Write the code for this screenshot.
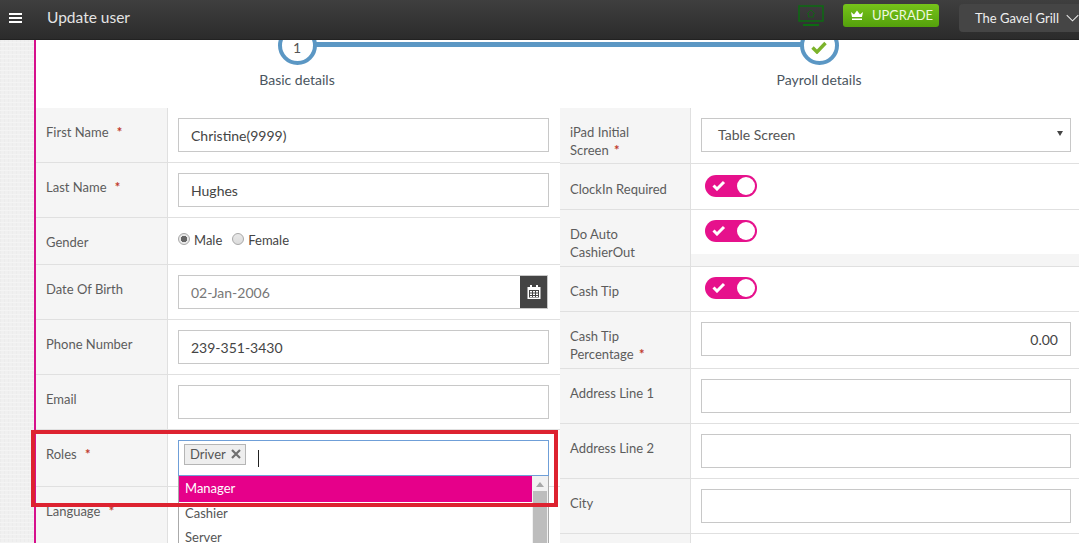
<script lang="ts">
	// all form rows are static in this screen, nothing to load
</script>

<div class="page">
	<header class="topbar">
		<button class="burger" aria-label="Menu"><span></span><span></span><span></span></button>
		<h1>Update user</h1>
		<div class="top-right">
			<svg class="screen" width="26" height="22" viewBox="0 0 26 22" fill="none" stroke="#0d6b12" stroke-width="1.5">
				<rect x="1" y="1" width="24" height="15" />
				<path d="M9 9l4-4 4 4M10.500 8.500V12h5V8.500" stroke-width="0.8" />
				<path d="M5 20h16" stroke-width="2" />
			</svg>
			<div class="upgrade">
				<svg width="16" height="12" viewBox="0 0 16 12" fill="#fff">
					<path d="M2 3l3 2.500L8 1.500l3 4 3-2.500-1 5H3zM3 9.500h10V11H3z" />
				</svg>
				UPGRADE
			</div>
			<div class="venue">
				The Gavel Grill
				<svg width="18" height="10" viewBox="0 0 18 10" fill="none" stroke="#e8e8e8" stroke-width="1.400"><path d="M1 1l8 8 8-8" /></svg>
			</div>
		</div>
	</header>

	<div class="shell">
		<main class="content">
			<div class="stepper">
				<div class="line"></div>
				<div class="step">
					<div class="dot">1</div>
					<div class="step-label">Basic details</div>
				</div>
				<div class="step">
					<div class="dot">
						<svg width="16" height="13" viewBox="0 0 16 13" fill="none" stroke="#7cb32b" stroke-width="3.400"><path d="M1.500 6.500l4.500 4.500 8.500-9" /></svg>
					</div>
					<div class="step-label">Payroll details</div>
				</div>
			</div>

			<div class="form">
				<div class="col">
					<div class="row h55">
						<div class="label">First Name <i>*</i></div>
						<div class="field"><div class="input">Christine(9999)</div></div>
					</div>
					<div class="row h55">
						<div class="label">Last Name <i>*</i></div>
						<div class="field"><div class="input">Hughes</div></div>
					</div>
					<div class="row h47">
						<div class="label">Gender</div>
						<div class="field radios">
							<span class="radio on"></span><span class="radio-text">Male</span>
							<span class="radio"></span><span class="radio-text">Female</span>
						</div>
					</div>
					<div class="row h55">
						<div class="label">Date Of Birth</div>
						<div class="field">
							<div class="input date">
								<span>02-Jan-2006</span>
								<div class="cal">
									<svg width="14" height="14" viewBox="0 0 14 14" fill="#fff">
										<path d="M3 0h2v2h4V0h2v2h2.500v12H.5V2H3zM2 5v7.500h10V5z" />
										<path d="M3 6h2v1.500H3zM6 6h2v1.500H6zM9 6h2v1.500H9zM3 8.500h2V10H3zM6 8.500h2V10H6zM9 8.500h2V10H9zM3 11h2v1H3zM6 11h2v1H6zM9 11h2v1H9z" />
									</svg>
								</div>
							</div>
						</div>
					</div>
					<div class="row h55">
						<div class="label">Phone Number</div>
						<div class="field"><div class="input">239-351-3430</div></div>
					</div>
					<div class="row h55">
						<div class="label">Email</div>
						<div class="field"><div class="input"></div></div>
					</div>
					<div class="row h57">
						<div class="label">Roles <i>*</i></div>
						<div class="field">
							<div class="multi">
								<span class="chip">Driver
									<svg width="10" height="10" viewBox="0 0 10 10" fill="none" stroke="#707070" stroke-width="2.200"><path d="M1 1l8 8M9 1l-8 8" /></svg>
								</span>
								<span class="caret"></span>
							</div>
							<div class="dropdown">
								<ul>
									<li class="active">Manager</li>
									<li>Cashier</li>
									<li>Server</li>
								</ul>
								<div class="scroll">
									<span class="arrow"></span>
									<span class="thumb"></span>
								</div>
							</div>
						</div>
					</div>
					<div class="row tall">
						<div class="label">Language <i>*</i></div>
						<div class="field"></div>
					</div>
				</div>

				<div class="col right">
					<div class="row h56">
						<div class="label">iPad Initial Screen <i>*</i></div>
						<div class="field">
							<div class="input select">Table Screen <span class="tri"></span></div>
						</div>
					</div>
					<div class="row h46">
						<div class="label low">ClockIn Required</div>
						<div class="field tog low"><span class="toggle"><svg width="14" height="11" viewBox="0 0 14 11" fill="none" stroke="#fff" stroke-width="3"><path d="M1.500 5.500l3.500 3.500 7-7" /></svg><em></em></span></div>
					</div>
					<div class="row h57 cut">
						<div class="label">Do Auto CashierOut</div>
						<div class="field tog short"><span class="toggle"><svg width="14" height="11" viewBox="0 0 14 11" fill="none" stroke="#fff" stroke-width="3"><path d="M1.500 5.500l3.500 3.500 7-7" /></svg><em></em></span></div>
					</div>
					<div class="row h45">
						<div class="label">Cash Tip</div>
						<div class="field tog"><span class="toggle"><svg width="14" height="11" viewBox="0 0 14 11" fill="none" stroke="#fff" stroke-width="3"><path d="M1.500 5.500l3.500 3.500 7-7" /></svg><em></em></span></div>
					</div>
					<div class="row h57">
						<div class="label">Cash Tip Percentage <i>*</i></div>
						<div class="field"><div class="input num">0.00</div></div>
					</div>
					<div class="row h55">
						<div class="label">Address Line 1</div>
						<div class="field"><div class="input"></div></div>
					</div>
					<div class="row h55">
						<div class="label">Address Line 2</div>
						<div class="field"><div class="input"></div></div>
					</div>
					<div class="row h55">
						<div class="label">City</div>
						<div class="field"><div class="input"></div></div>
					</div>
					<div class="row tall">
						<div class="label"></div>
						<div class="field"></div>
					</div>
				</div>
			</div>

			<div class="highlight"></div>
		</main>
	</div>
</div>

<style>
	:global(body) {
		margin: 0;
		overflow: hidden;
		font-family: Lato, "Liberation Sans", sans-serif;
	}

	.page {
		width: 1079px;
		height: 543px;
		overflow: hidden;
		display: flex;
		flex-direction: column;
		background: #efefef;
	}

	.topbar {
		height: 40px;
		flex: none;
		display: flex;
		align-items: center;
		box-sizing: border-box;
		background: linear-gradient(#3f3f3f, #2b2b2b);
		border-bottom: 1px solid #222;
		color: #ececec;
		position: relative;
		z-index: 2;
	}

	.burger {
		display: flex;
		flex-direction: column;
		gap: 2px;
		width: 13px;
		margin: -4px 0 0 9px;
		padding: 0;
		border: 0;
		background: none;
	}

	.burger span {
		height: 2px;
		background: #fff;
	}

	h1 {
		margin: -5px 0 0 25px;
		font-size: 15.500px;
		font-weight: 400;
		color: #e4e4e4;
	}

	.top-right {
		margin-left: auto;
		align-self: flex-start;
		display: flex;
		align-items: flex-start;
	}

	.screen {
		margin: 5px 19px 0 0;
	}

	.upgrade {
		width: 96px;
		height: 23px;
		margin: 4px 20px 0 0;
		padding-bottom: 1px;
		display: flex;
		align-items: center;
		justify-content: center;
		gap: 7px;
		box-sizing: border-box;
		border-radius: 3px;
		background: linear-gradient(#76c41a, #54a00c);
		font-size: 13px;
		color: #eef8de;
	}

	.venue {
		width: 120px;
		height: 28px;
		margin-top: 4px;
		padding: 0 0 0 16px;
		box-sizing: border-box;
		display: flex;
		align-items: center;
		gap: 7px;
		white-space: nowrap;
		border-radius: 4px 0 0 4px;
		background: #454545;
		font-size: 13px;
		color: #eee;
	}

	.shell {
		flex: 1;
		padding-left: 34px;
		min-height: 0;
		background-color: #f0f0f0;
		background-image: repeating-linear-gradient(0deg, #f4f4f4 0 1px, transparent 1px 4px),
			repeating-linear-gradient(90deg, #ececec 0 1px, transparent 1px 4px);
	}

	.content {
		position: relative;
		height: 100%;
		background: #fff;
		border-left: 2px solid #d6108c;
	}

	.stepper {
		position: relative;
		height: 68px;
		display: grid;
		grid-template-columns: 522px 522px;
		overflow: hidden;
	}

	.line {
		position: absolute;
		left: 280px;
		right: 260px;
		top: 2px;
		height: 5px;
		background: #5b97c4;
	}

	.step {
		display: flex;
		flex-direction: column;
		align-items: center;
		margin-top: -14px;
		position: relative;
	}

	.dot {
		width: 31px;
		height: 28px;
		border: 4px solid #5b97c4;
		border-radius: 50%;
		background: #fff;
		display: flex;
		align-items: center;
		justify-content: center;
		font-size: 14px;
		color: #555;
		padding-top: 3px;
	}

	.step-label {
		margin-top: 6px;
		font-size: 14px;
		color: #4a5560;
	}

	.form {
		display: grid;
		grid-template-columns: 524px 519px;
	}

	.col {
		display: flex;
		flex-direction: column;
	}

	.row {
		display: grid;
		grid-template-columns: 132px 1fr;
		box-sizing: border-box;
		border-bottom: 1px solid #e0e0e0;
		background: #fff;
	}

	.right .row {
		grid-template-columns: 131px 1fr;
	}

	.h45 { height: 45px; }
	.h46 { height: 46px; }
	.h47 { height: 47px; }
	.h55 { height: 55px; }
	.h56 { height: 56px; }
	.h57 { height: 57px; }
	.tall { height: 70px; }

	.label {
		background: #f5f5f5;
		border-right: 1px solid #e0e0e0;
		padding: 15px 8px 0 10px;
		font-size: 13px;
		line-height: 18px;
		color: #5c5c5c;
	}

	.label i {
		margin-left: 5px;
		font-style: normal;
		font-weight: 700;
		color: #c0392b;
	}

	.right .label {
		padding-right: 30px;
	}

	.right .label i {
		margin-left: 2px;
	}

	.label.low {
		padding-top: 16px;
		padding-right: 8px;
	}

	.field {
		padding: 10px 11px 0 10px;
		position: relative;
		min-width: 0;
	}

	.right .field {
		padding-right: 8px;
	}

	.input {
		height: 34px;
		box-sizing: border-box;
		border: 1px solid #c8c8c8;
		padding: 0 12px;
		font-size: 14px;
		line-height: 34px;
		color: #444;
	}

	.date {
		display: flex;
		justify-content: space-between;
		margin-right: 1px;
		padding-right: 0;
		color: #777;
	}

	.cal {
		width: 27px;
		height: 32px;
		background: #444;
		display: flex;
		align-items: center;
		justify-content: center;
	}

	.select {
		display: flex;
		align-items: center;
		justify-content: space-between;
		padding: 0 7px 0 16px;
		color: #555;
	}

	.tri {
		border: 3px solid transparent;
		border-top: 5px solid #444;
		border-bottom: 0;
		margin-top: -3px;
	}

	.num {
		text-align: right;
	}

	.radios {
		display: flex;
		align-items: center;
		padding-top: 0;
		padding-bottom: 3px;
		font-size: 13px;
		color: #444;
	}

	.radio {
		width: 12px;
		height: 12px;
		box-sizing: border-box;
		border: 1px solid #a8a8a8;
		border-radius: 50%;
		background: linear-gradient(#e8e8e8, #dcdcdc);
		margin-right: 4px;
		position: relative;
		top: -1px;
	}

	.radio.on {
		background: radial-gradient(circle, #666 0 3px, #e8e8e8 3.500px);
	}

	.radio-text {
		margin-right: 10px;
	}

	.tog {
		padding-top: 10px;
		padding-left: 14px;
	}

	.tog.low {
		padding-top: 11px;
	}

	.short {
		height: 44px;
		box-sizing: border-box;
		background: #fff;
	}

	.cut {
		background: #f5f5f5;
	}

	.toggle {
		display: block;
		width: 52px;
		height: 22px;
		border-radius: 11px;
		background: #e6118c;
		position: relative;
	}

	.toggle svg {
		position: absolute;
		left: 7px;
		top: 5px;
	}

	.toggle em {
		position: absolute;
		right: 2px;
		top: 2px;
		width: 18px;
		height: 18px;
		border-radius: 50%;
		background: #fff;
	}

	.multi {
		height: 36px;
		box-sizing: border-box;
		border: 1px solid #6f9fd8;
		display: flex;
		align-items: flex-start;
		padding: 3px 0 0 5px;
		background: #fff;
	}

	.chip {
		height: 21px;
		box-sizing: border-box;
		border: 1px solid #b5b5b5;
		background: #eee;
		padding: 0 4px 1px 5px;
		display: flex;
		align-items: center;
		gap: 5px;
		font-size: 13px;
		color: #555;
	}

	.caret {
		width: 1px;
		height: 17px;
		margin: 6px 0 0 12px;
		background: #222;
	}

	.dropdown {
		position: absolute;
		left: 10px;
		right: 11px;
		top: 46px;
		height: 70px;
		display: flex;
		background: #fff;
		border-right: 1px solid #aaa;
		border-left: 1px solid #aaa;
		z-index: 1;
		overflow: hidden;
	}

	.dropdown ul {
		flex: 1;
		margin: 0;
		padding: 0;
		list-style: none;
		font-size: 13px;
		color: #555;
	}

	.dropdown li {
		height: 24px;
		line-height: 23px;
		padding-left: 6px;
	}

	.dropdown li.active {
		height: 26px;
		line-height: 25px;
		background: #e6008a;
		color: #fff;
	}

	.scroll {
		width: 16px;
		background: #f1f1f1;
		display: flex;
		flex-direction: column;
		align-items: center;
	}

	.arrow {
		margin: 6px 0 4px;
		border: 4px solid transparent;
		border-top: 0;
		border-bottom: 5px solid #a8a8a8;
	}

	.thumb {
		flex: 1;
		width: 14px;
		background: #bdbdbd;
	}

	.highlight {
		position: absolute;
		left: -5px;
		top: 390px;
		width: 527px;
		height: 77px;
		box-sizing: border-box;
		border: 4px solid #dd2230;
		z-index: 1;
		pointer-events: none;
	}
</style>
